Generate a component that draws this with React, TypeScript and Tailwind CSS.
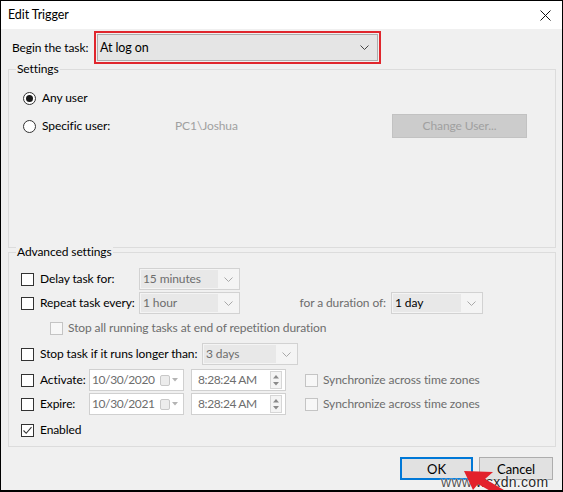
import React from "react";

function Check({ checked = false, disabled = false }: { checked?: boolean; disabled?: boolean }) {
  return (
    <span
      className={
        "w-[13px] h-[13px] shrink-0 border flex items-center justify-center " +
        (disabled ? "border-[#c4c4c4] bg-[#f7f7f7]" : "border-[#333333] bg-white")
      }
    >
      {checked && (
        <svg width="11" height="11" viewBox="0 0 11 11">
          <polyline points="1.5,5.5 4.2,8.3 9.5,2.2" fill="none" stroke="#333" strokeWidth="1.1" />
        </svg>
      )}
    </span>
  );
}

function Radio({ checked = false }: { checked?: boolean }) {
  return (
    <span className="w-[13px] h-[13px] shrink-0 rounded-full border border-[#333333] bg-white flex items-center justify-center">
      {checked && <span className="w-[7px] h-[7px] rounded-full bg-[#1a1a1a]" />}
    </span>
  );
}

function Chevron({ color = "#999" }: { color?: string }) {
  return (
    <svg width="9" height="5" viewBox="0 0 9 5">
      <polyline points="0.5,0.5 4.5,4.5 8.5,0.5" fill="none" stroke={color} strokeWidth="1" />
    </svg>
  );
}

function Combo({ text, className, dark = false }: { text: string; className: string; dark?: boolean }) {
  return (
    <div className={"h-[22px] shrink-0 border border-[#d2d2d2] bg-[#f4f4f4] p-[1px] flex " + className}>
      <div className={"flex-1 bg-[#e8e8e8] flex items-center pl-[2px] whitespace-nowrap " + (dark ? "text-black" : "text-[#6d6d6d]")}>
        {text}
      </div>
      <div className="w-[20px] flex items-center justify-center">
        <Chevron color="#a8a8a8" />
      </div>
    </div>
  );
}

function DateField({ text }: { text: string }) {
  return (
    <div className="w-[95px] h-[22px] shrink-0 border border-[#d0d0d0] bg-white flex items-center pl-[2px] pr-[5px] text-[#6d6d6d] whitespace-nowrap">
      <span className="tracking-[-0.4px]">{text}</span>
      <span className="ml-auto flex items-center gap-[2px]">
        <span className="w-[10px] h-[11px] rounded-[2px] border border-[#c8c8c8] bg-[#ececec]" />
        <svg width="6" height="4" viewBox="0 0 6 4">
          <polygon points="0,0 6,0 3,3.5" fill="#b4b4b4" />
        </svg>
      </span>
    </div>
  );
}

function TimeField({ text }: { text: string }) {
  return (
    <div className="w-[95px] h-[22px] shrink-0 border border-[#d0d0d0] bg-white flex items-center pl-[6px] pr-[3px] text-[#6d6d6d] whitespace-nowrap">
      <span className="tracking-[-0.4px]">{text}</span>
      <span className="ml-auto w-[12px] h-[18px] border border-[#d6d6d6] bg-[#f4f4f4] flex flex-col items-center justify-center gap-[3px]">
        <svg width="6" height="4" viewBox="0 0 6 4">
          <polygon points="0,3.5 6,3.5 3,0" fill="#8a8a8a" />
        </svg>
        <svg width="6" height="4" viewBox="0 0 6 4">
          <polygon points="0,0 6,0 3,3.5" fill="#8a8a8a" />
        </svg>
      </span>
    </div>
  );
}

export default function App() {
  return (
    <div className="w-[563px] h-[492px] border border-black border-b-2 bg-[#f0f0f0] flex flex-col relative overflow-hidden font-['Lato',sans-serif] text-[12px] tracking-[-0.1px] leading-[16px] text-black whitespace-nowrap">
      {/* Title bar */}
      <div className="h-[28px] bg-white flex items-center justify-between pl-[7px] pr-[11px] shrink-0">
        <span className="text-[12.5px]">Edit Trigger</span>
        <svg width="11" height="11" viewBox="0 0 11 11">
          <line x1="0.5" y1="0.5" x2="10.5" y2="10.5" stroke="#111" strokeWidth="1" />
          <line x1="10.5" y1="0.5" x2="0.5" y2="10.5" stroke="#111" strokeWidth="1" />
        </svg>
      </div>

      {/* Begin the task */}
      <div className="flex items-center pl-[11px] mt-[2px]">
        <span className="w-[82px]">Begin the task:</span>
        <div className="w-[287px] h-[33px] border-2 border-[#e0262d] p-[1px]">
          <div className="h-full border border-[#adadad] bg-[#e5e5e5] flex items-center pl-[2px] pr-[8px]">
            <span className="text-[12.5px]">At log on</span>
            <span className="ml-auto">
              <Chevron color="#444" />
            </span>
          </div>
        </div>
      </div>

      {/* Settings */}
      <div className="relative ml-[7px] mr-[6px] mt-[5px] h-[179px] border border-[#dcdcdc] pt-[18px] pl-[14px]">
        <span className="absolute -top-[9px] left-[7px] px-[1px] bg-[#f0f0f0]">Settings</span>
        <div className="flex items-center h-[20px]">
          <Radio checked />
          <span className="ml-[6px]">Any user</span>
        </div>
        <div className="flex items-center h-[24px] mt-[6px]">
          <Radio />
          <span className="ml-[6px] w-[133px]">Specific user:</span>
          <span className="text-[#a0a0a0]">PC1\Joshua</span>
          <div className="ml-auto mr-[28px] w-[135px] h-[24px] bg-[#cccccc] border border-[#c2c2c2] text-[#a0a0a0] flex items-center justify-center">
            Change User...
          </div>
        </div>
      </div>

      {/* Advanced settings */}
      <div className="relative ml-[7px] mr-[6px] mt-[4px] h-[195px] border border-[#dcdcdc] pt-[14px] pl-[12px]">
        <span className="absolute -top-[9px] left-[7px] px-[1px] bg-[#f0f0f0]">Advanced settings</span>

        <div className="flex items-center h-[24px]">
          <Check />
          <span className="ml-[6px] w-[99px]">Delay task for:</span>
          <Combo text="15 minutes" className="w-[101px]" />
        </div>

        <div className="flex items-center h-[24px]">
          <Check />
          <span className="ml-[6px] w-[99px]">Repeat task every:</span>
          <Combo text="1 hour" className="w-[101px]" />
          <span className="w-[151px] text-right pr-[5px] text-[#6d6d6d]">for a duration of:</span>
          <Combo text="1 day" className="w-[92px]" dark />
        </div>

        <div className="flex items-center h-[24px] mt-[1px] pl-[29px]">
          <Check disabled />
          <span className="ml-[5px] text-[#6d6d6d]">Stop all running tasks at end of repetition duration</span>
        </div>

        <div className="flex items-center h-[24px] mt-[2px]">
          <Check />
          <span className="ml-[6px] w-[162px]">Stop task if it runs longer than:</span>
          <Combo text="3 days" className="w-[96px]" />
        </div>

        <div className="flex items-center h-[24px] mt-[2px]">
          <Check />
          <span className="ml-[6px] w-[49px]">Activate:</span>
          <DateField text="10/30/2020" />
          <span className="ml-[7px]">
            <TimeField text="8:28:24 AM" />
          </span>
          <span className="ml-[19px]">
            <Check disabled />
          </span>
          <span className="ml-[5px] text-[#6d6d6d]">Synchronize across time zones</span>
        </div>

        <div className="flex items-center h-[24px]">
          <Check />
          <span className="ml-[6px] w-[49px]">Expire:</span>
          <DateField text="10/30/2021" />
          <span className="ml-[7px]">
            <TimeField text="8:28:24 AM" />
          </span>
          <span className="ml-[19px]">
            <Check disabled />
          </span>
          <span className="ml-[5px] text-[#6d6d6d]">Synchronize across time zones</span>
        </div>

        <div className="flex items-center h-[24px] mt-[2px]">
          <Check checked />
          <span className="ml-[6px]">Enabled</span>
        </div>
      </div>

      {/* Buttons */}
      <div className="flex justify-end gap-[6px] mt-[10px] pr-[9px]">
        <div className="w-[73px] h-[23px] border-2 border-[#0078d7] bg-[#e1e1e1] flex items-center justify-center text-[13px]">OK</div>
        <div className="w-[74px] h-[23px] border border-[#adadad] bg-[#e1e1e1] flex items-center justify-center text-[13px]">Cancel</div>
      </div>

      {/* Watermark */}
      <span className="absolute left-[440px] top-[474px] text-[14px] leading-[14px] font-['Liberation_Sans',sans-serif] tracking-[0.3px] [text-shadow:0_0_2px_#fff,0_0_1px_#fff]">
        <span className="text-[#555]">www.</span>
        <span className="text-[#2a2a2a]">wsxdn.com</span>
      </span>

      {/* Red arrow */}
      <svg className="absolute left-[455px] top-[462px]" width="80" height="32" viewBox="0 0 80 32">
        <polygon points="8,8 37,9 29,16 60,34 52,38 22,21 17,27" fill="#e3212b" />
      </svg>
    </div>
  );
}
